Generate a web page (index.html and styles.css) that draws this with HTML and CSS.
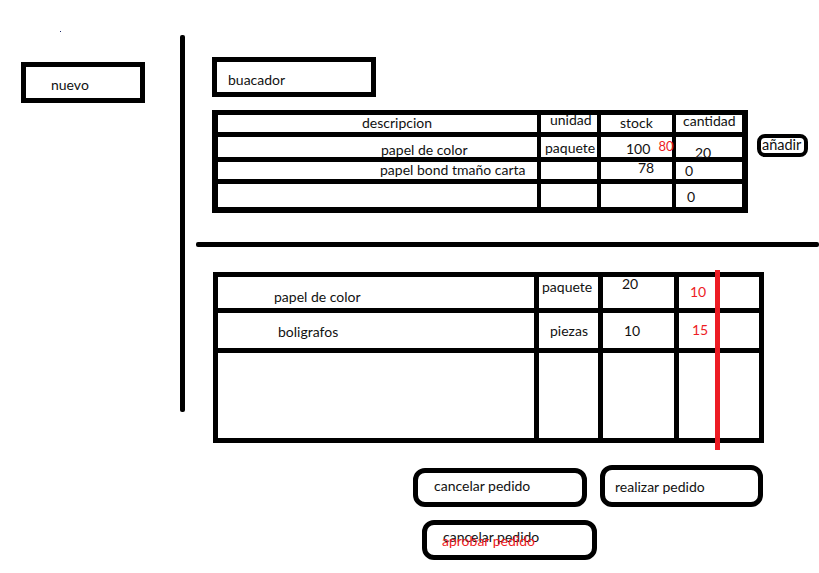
FILE: index.html
```html
<!DOCTYPE html>
<html lang="es">
<head>
    <meta charset="UTF-8">
    <meta name="viewport" content="width=device-width, initial-scale=1.0">
    <title>Pedidos - boceto</title>
    <link rel="stylesheet" href="styles.css">
</head>
<body>
    <div class="page">
        <aside class="side">
            <span class="dot"></span>
            <button class="btn-new">nuevo</button>
        </aside>

        <div class="vline"></div>

        <main class="main">
            <div class="search">buacador</div>

            <div class="stock-row">
                <div class="grid stock-table">
                    <div class="cell s-desc-h">descripcion</div>
                    <div class="cell s-unit-h">unidad</div>
                    <div class="cell s-stock-h">stock</div>
                    <div class="cell s-qty-h">cantidad</div>

                    <div class="cell s-desc-1">papel de color</div>
                    <div class="cell s-unit-1">paquete</div>
                    <div class="cell s-stock-1"><span class="num-old">100</span><span class="red num-new">80</span></div>
                    <div class="cell s-qty-1">20</div>

                    <div class="cell s-desc-2">papel bond tmaño carta</div>
                    <div class="cell"></div>
                    <div class="cell s-stock-2">78</div>
                    <div class="cell s-qty-2">0</div>

                    <div class="cell"></div>
                    <div class="cell"></div>
                    <div class="cell"></div>
                    <div class="cell s-qty-3">0</div>
                </div>
                <button class="btn-add">añadir</button>
            </div>

            <div class="hline"></div>

            <div class="order-wrap">
                <div class="grid order-table">
                    <div class="cell o-desc-1">papel de color</div>
                    <div class="cell o-unit-1">paquete</div>
                    <div class="cell o-stock-1">20</div>
                    <div class="cell o-qty-1 red">10</div>

                    <div class="cell o-desc-2">boligrafos</div>
                    <div class="cell o-unit-2">piezas</div>
                    <div class="cell o-stock-2">10</div>
                    <div class="cell o-qty-2 red">15</div>

                    <div class="cell"></div>
                    <div class="cell"></div>
                    <div class="cell"></div>
                    <div class="cell"></div>
                </div>
                <div class="red-line"></div>
            </div>

            <div class="actions">
                <button class="btn-round btn-cancel">cancelar pedido</button>
                <button class="btn-round btn-send">realizar pedido</button>
            </div>

            <button class="btn-round btn-approve">
                cancelar pedido
                <span class="approve-label">aprobar pedido</span>
            </button>
        </main>
    </div>
</body>
</html>
```

FILE: styles.css
```css
* {
    margin: 0;
    padding: 0;
    box-sizing: border-box;
}

body {
    font-family: 'Lato', 'Open Sans', sans-serif;
    font-size: 14px;
    color: #111;
    background: #fff;
    width: 819px;
    height: 573px;
    overflow: hidden;
}

button {
    font: inherit;
    color: inherit;
    background: #fff;
    text-align: left;
}

.red {
    color: #ed1c24;
}

.page {
    display: flex;
    align-items: flex-start;
}

/* left column */
.side {
    width: 180px;
    padding: 31px 0 0 21px;
}

.dot {
    display: block;
    width: 1px;
    height: 1px;
    margin-left: 39px;
    background: #1d2a6b;
}

.btn-new {
    display: block;
    width: 124px;
    height: 41px;
    margin-top: 30px;
    border: 5px solid #000;
    padding: 4px 0 0 25px;
}

.vline {
    width: 5px;
    height: 377px;
    margin-top: 35px;
    background: #000;
    border-radius: 2px;
}

/* main area */
.main {
    padding: 57px 0 0 27px;
}

.search {
    width: 164px;
    height: 40px;
    border: 5px solid #000;
    padding: 10px 0 0 11px;
    line-height: 16px;
}

.stock-row {
    display: flex;
    align-items: flex-start;
    margin-top: 13px;
}

.grid {
    display: grid;
    background: #000;
}

.cell {
    background: #fff;
    display: flex;
    align-items: flex-start;
    line-height: 10px;
    white-space: nowrap;
}

.stock-table {
    grid-template-columns: 319px 56px 71px 66px;
    grid-template-rows: 17px 20px 17px 23px;
    column-gap: 4px;
    row-gap: 5px;
    padding: 5px 6px 6px 6px;
}

.s-desc-h { padding: 3px 0 0 144px; }
.s-unit-h { padding: 0 0 0 9px; }
.s-stock-h { padding: 3px 0 0 19px; }
.s-qty-h { padding: 1px 0 0 7px; }

.s-desc-1 { padding: 8px 0 0 163px; }
.s-unit-1 { padding: 6px 0 0 4px; }
.s-stock-1 { padding: 4px 0 0 25px; }
.s-qty-1 { padding: 11px 0 0 19px; }

.num-old {
    margin: 3px 8px 0 0;
}

.num-new {
    font-size: 13px;
}

.s-desc-2 { padding: 3px 0 0 162px; }
.s-stock-2 { padding: 1px 0 0 37px; }
.s-qty-2 { padding: 4px 0 0 9px; }

.s-qty-3 { padding: 8px 0 0 11px; }

.btn-add {
    width: 51px;
    height: 23px;
    margin: 24px 0 0 9px;
    border: 4px solid #000;
    border-radius: 8px;
    padding: 0 0 1px 1px;
    font-size: 14.5px;
    line-height: 14px;
}

.hline {
    width: 623px;
    height: 5px;
    margin: 29px 0 0 -16px;
    background: #000;
    border-radius: 2px;
}

/* order table */
.order-wrap {
    position: relative;
    width: 551px;
    margin: 25px 0 0 1px;
}

.order-table {
    grid-template-columns: 316px 59px 71px 80px;
    grid-template-rows: 31px 35px 85px;
    column-gap: 5px;
    row-gap: 5px;
    padding: 5px;
}

.o-desc-1 { padding: 15px 0 0 56px; }
.o-unit-1 { padding: 5px 0 0 3px; }
.o-stock-1 { padding: 2px 0 0 19px; }
.o-qty-1 { padding: 10px 0 0 11px; }

.o-desc-2 { padding: 14px 0 0 60px; }
.o-unit-2 { padding: 13px 0 0 11px; }
.o-stock-2 { padding: 13px 0 0 21px; }
.o-qty-2 { padding: 12px 0 0 13px; }

.red-line {
    position: absolute;
    left: 502px;
    top: -2px;
    width: 5px;
    height: 180px;
    background: #ed1c24;
}

/* action buttons */
.actions {
    display: flex;
    align-items: flex-start;
    gap: 13px;
    margin-top: 22px;
    padding-left: 201px;
}

.btn-round {
    display: block;
    border: 5px solid #000;
    border-radius: 12px;
    line-height: 16px;
}

.btn-cancel {
    width: 174px;
    height: 39px;
    margin-top: 3px;
    padding: 0 0 3px 16px;
}

.btn-send {
    width: 163px;
    height: 42px;
    padding: 2px 0 0 10px;
}

.btn-approve {
    position: relative;
    width: 175px;
    height: 40px;
    margin: 13px 0 0 210px;
    padding: 0 0 6px 16px;
}

.approve-label {
    position: absolute;
    left: 15px;
    top: 8px;
    color: #ed1c24;
}
```
